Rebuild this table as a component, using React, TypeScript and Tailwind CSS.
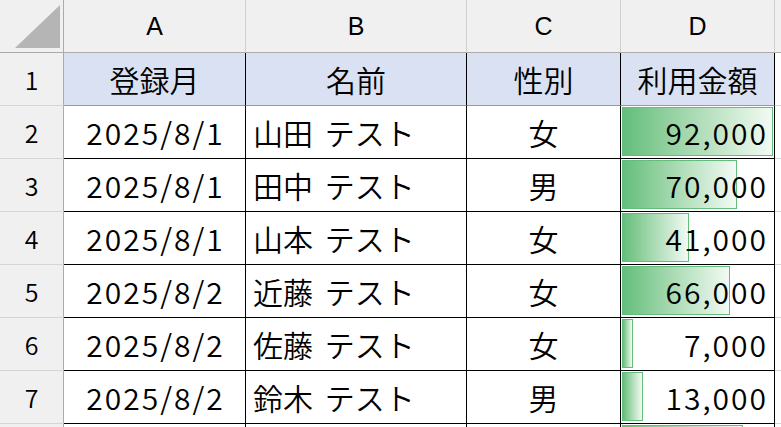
import React from "react";

const font = { fontFamily: '"Noto Sans CJK JP", "Noto Sans", sans-serif' };
const hdr = { fontFamily: '"Liberation Sans", Arial, sans-serif' };

type Row = { date: string; name: string; sex: string; amount: number };

const rows: Row[] = [
  { date: "2025/8/1", name: "山田 テスト", sex: "女", amount: 92000 },
  { date: "2025/8/1", name: "田中 テスト", sex: "男", amount: 70000 },
  { date: "2025/8/1", name: "山本 テスト", sex: "女", amount: 41000 },
  { date: "2025/8/2", name: "近藤 テスト", sex: "女", amount: 66000 },
  { date: "2025/8/2", name: "佐藤 テスト", sex: "女", amount: 7000 },
  { date: "2025/8/2", name: "鈴木 テスト", sex: "男", amount: 13000 },
];

const MAX = 92000;
const BAR_MAX = 151;

export default function App() {
  return (
    <div className="w-[781px] h-[427px] overflow-hidden bg-white text-black" style={font}>
      <div className="grid grid-cols-[64px_182px_221px_154px_154px_1fr] auto-rows-[53px]">
        {/* column header row */}
        <div className="bg-[#f0f0f0] border-r border-b border-[#ababab] flex">
          <svg width="63" height="52" viewBox="0 0 63 52">
            <polygon points="15,48 60,5 60,48" fill="#b5b5b5" />
          </svg>
        </div>
        {["A", "B", "C", "D"].map((c) => (
          <div
            key={c}
            style={hdr}
            className="bg-[#f0f0f0] border-r border-r-[#d0d0d0] border-b border-b-[#ababab] flex items-center justify-center text-[25px] leading-none pt-[1px]"
          >
            {c}
          </div>
        ))}
        <div className="bg-[#f0f0f0] border-b border-b-[#ababab]" />

        {/* row 1 */}
        <div className="bg-[#f0f0f0] border-r border-r-[#ababab] border-b border-b-[#d4d4d4] flex items-center justify-center text-[25px] font-[350] leading-none">
          1
        </div>
        {["登録月", "名前", "性別", "利用金額"].map((h) => (
          <div
            key={h}
            className="bg-[#d9e1f2] border-r border-r-black border-b border-b-[#9a9a9a] flex items-center justify-center text-[30px] font-[350] leading-none"
          >
            {h}
          </div>
        ))}
        <div className="border-b border-b-[#d4d4d4]" />

        {rows.map((r, i) => (
          <React.Fragment key={i}>
            <div className="bg-[#f0f0f0] border-r border-r-[#ababab] border-b border-b-[#d4d4d4] flex items-center justify-center text-[25px] font-[350] leading-none">
              {i + 2}
            </div>
            <div className="border-r border-b border-black flex items-center justify-center text-[30px] font-[350] leading-none tracking-[2px] tabular-nums pl-[2px]">
              {r.date}
            </div>
            <div className="border-r border-b border-black flex items-center pl-[7px] text-[30px] font-[350] leading-none whitespace-pre [word-spacing:5px]">
              {r.name}
            </div>
            <div className="border-r border-b border-black flex items-center justify-center text-[30px] font-[350] leading-none">
              {r.sex}
            </div>
            <div className="relative border-r border-b border-black flex items-center justify-end pr-[6px] text-[30px] font-[350] leading-none tracking-[2px] tabular-nums">
              <div
                className="absolute left-[1px] top-[1px] h-[49px] border border-[#63be7b] bg-gradient-to-r from-[#63be7b] to-[#f2faf4]"
                style={{ width: `${Math.round((r.amount / MAX) * BAR_MAX)}px` }}
              />
              <span className="relative">{r.amount.toLocaleString("en-US")}</span>
            </div>
            <div className="border-b border-b-[#d4d4d4]" />
          </React.Fragment>
        ))}

        {/* row 8 (partially visible) */}
        <div className="bg-[#f0f0f0] border-r border-r-[#ababab] border-b border-b-[#d4d4d4]" />
        <div className="border-r border-b border-black" />
        <div className="border-r border-b border-black" />
        <div className="border-r border-b border-black" />
        <div className="relative border-r border-b border-black">
          <div
            className="absolute left-[1px] top-[1px] h-[49px] border border-[#63be7b] bg-gradient-to-r from-[#63be7b] to-[#f2faf4]"
            style={{ width: `${Math.round((74000 / MAX) * BAR_MAX)}px` }}
          />
        </div>
        <div className="border-b border-b-[#d4d4d4]" />
      </div>
    </div>
  );
}
